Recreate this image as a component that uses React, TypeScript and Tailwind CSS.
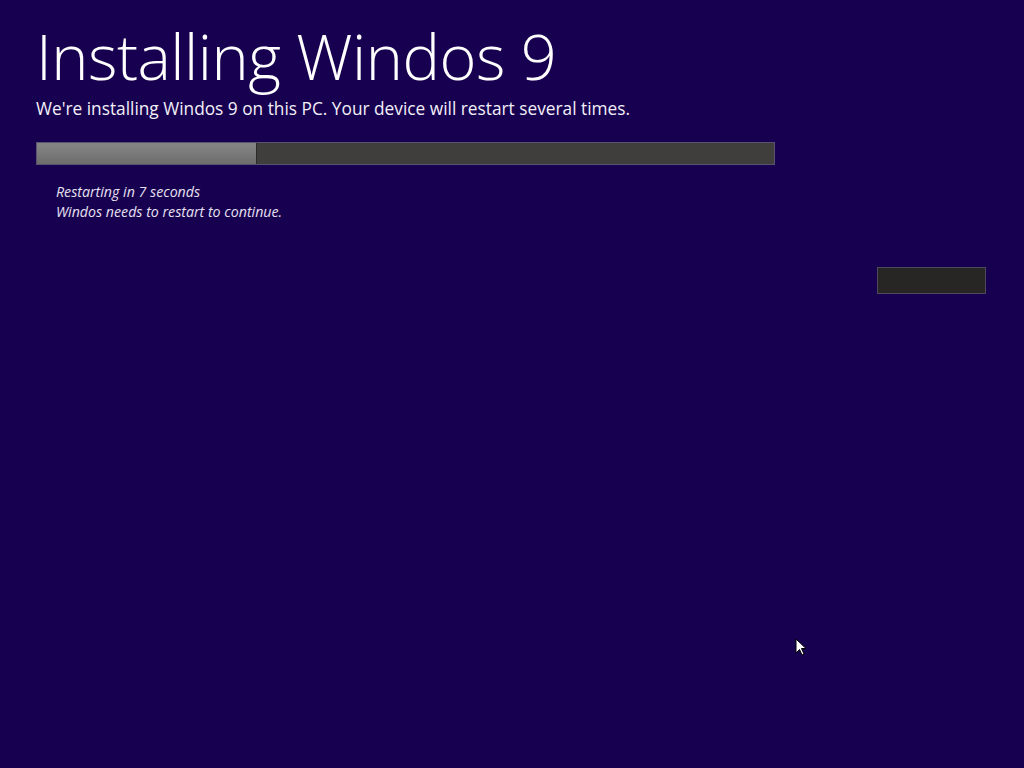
export default function App() {
  return (
    <div className="relative h-[768px] w-[1024px] overflow-hidden bg-[#180050] font-['Open_Sans',sans-serif] text-white">
      <div className="flex flex-col pl-9 pt-[18px]">
        <h1 className="text-[63px] font-light leading-[76px] tracking-[-0.5px]">Installing Windos 9</h1>
        <p className="mt-[3px] text-[17.3px] leading-6 text-[#f2f0f8]">
          We're installing Windos 9 on this PC. Your device will restart several times.
        </p>
        <div className="mt-[21px] flex h-[23px] w-[739px] border border-[#5a5370] bg-[#3f3e3c]">
          <div className="h-full w-[220px] border-r border-[#2a2a2a] bg-gradient-to-b from-[#858585] via-[#7a7a7a] to-[#6c6c6c]" />
        </div>
        <div className="mt-[17px] pl-5 text-[14.2px] italic leading-5 text-[#e6e2f2]">
          <p>Restarting in 7 seconds</p>
          <p>Windos needs to restart to continue.</p>
        </div>
        <div className="mt-[45px] flex justify-end pr-[38px]">
          <button className="h-[27px] w-[109px] border border-[#4e4a5c] bg-[#272624]" />
        </div>
      </div>
      <svg className="absolute left-[795px] top-[638px]" width="12" height="19" viewBox="0 0 12 19">
        <path d="M1 1 L1 15 L4.5 11.5 L7 17 L9 16 L6.5 10.5 L11 10.5 Z" fill="#fff" stroke="#000" strokeWidth="1" />
      </svg>
    </div>
  );
}
